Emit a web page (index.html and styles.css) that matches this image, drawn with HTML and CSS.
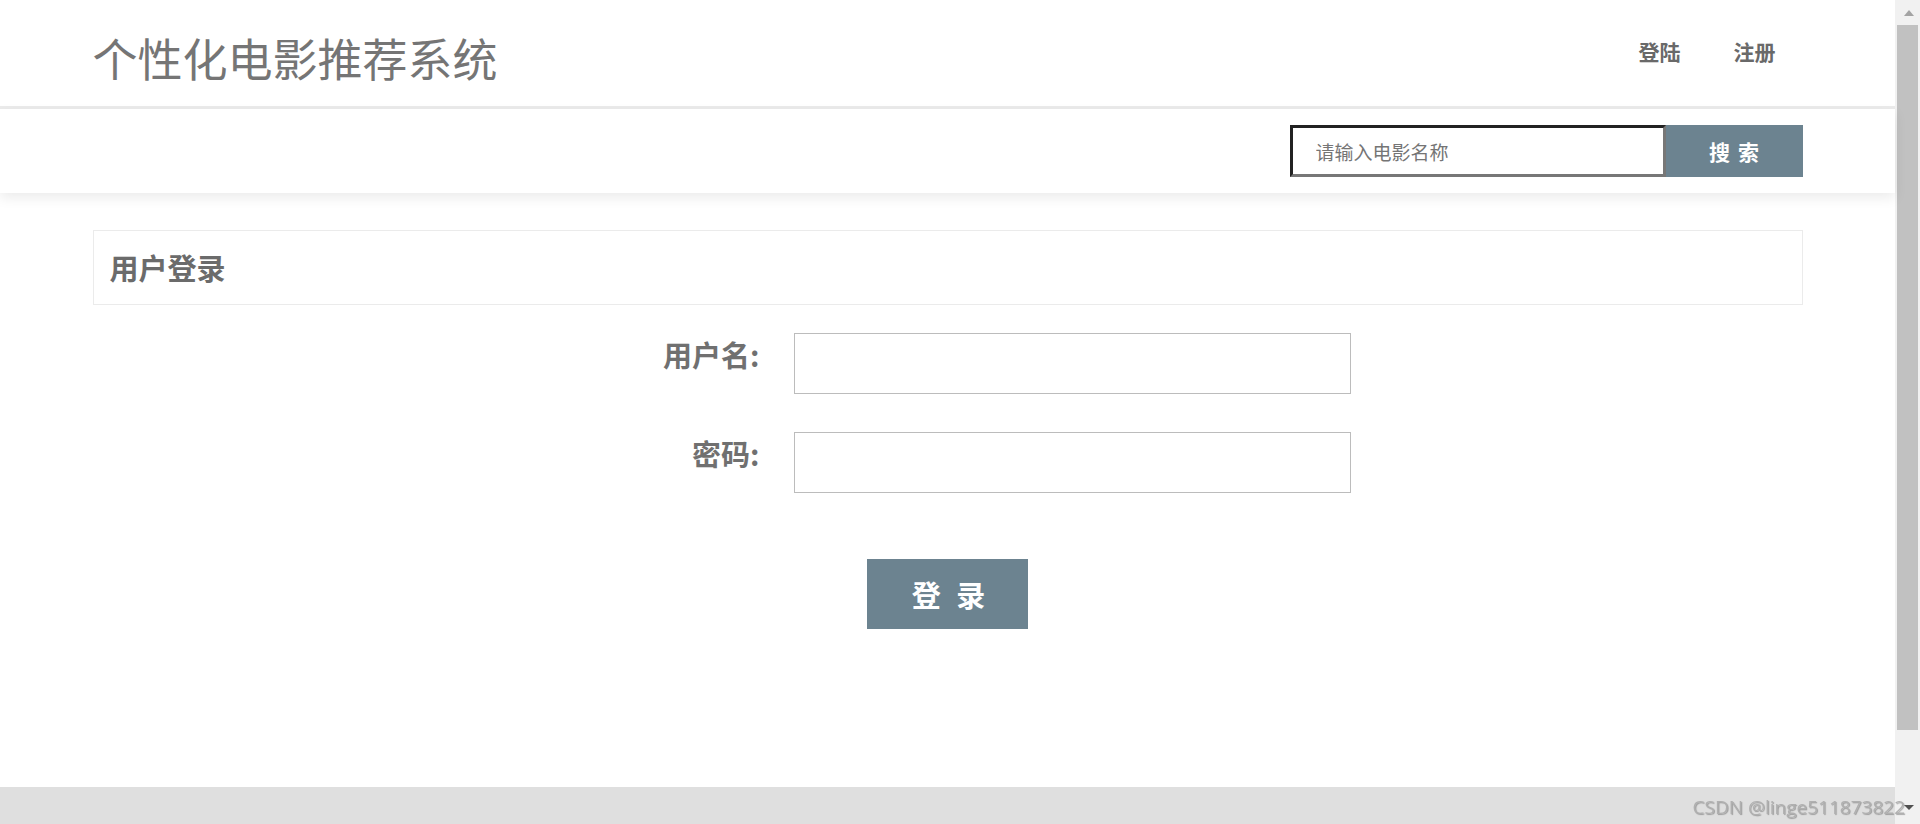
FILE: index.html
```html
<!DOCTYPE html>
<html lang="zh-CN">
<head>
<meta charset="utf-8">
<title>个性化电影推荐系统</title>
<link rel="stylesheet" href="styles.css">
</head>
<body>
<div class="window">
  <div class="page">
    <header class="topbar">
      <div class="container topbar-inner">
        <h1 class="brand">个性化电影推荐系统</h1>
        <nav class="nav">
          <a href="#" class="nav-link">登陆</a>
          <a href="#" class="nav-link">注册</a>
        </nav>
      </div>
    </header>
    <div class="searchbar">
      <div class="container searchbar-inner">
        <form class="search">
          <input class="search-input" type="text" placeholder="请输入电影名称">
          <button class="search-btn" type="button">搜 索</button>
        </form>
      </div>
    </div>
    <main class="container content">
      <div class="panel"><h2 class="panel-title">用户登录</h2></div>
      <form class="login">
        <label class="login-label">用户名:</label>
        <input class="login-input" type="text">
        <label class="login-label">密码:</label>
        <input class="login-input" type="password">
        <button class="login-btn" type="button">登 录</button>
      </form>
    </main>
    <footer class="footer"></footer>
  </div>
  <div class="scrollbar">
    <div class="sb-btn"><span class="arrow-up"></span></div>
    <div class="sb-thumb"></div>
    <div class="sb-track"></div>
    <div class="sb-btn sb-btn-down"><span class="arrow-down"></span></div>
  </div>
</div>
<div class="watermark">CSDN @linge511873822</div>
</body>
</html>
```
FILE: styles.css
```css
* { box-sizing: border-box; }
html, body { margin: 0; padding: 0; }
body {
  width: 1920px;
  height: 824px;
  overflow: hidden;
  background: #fff;
  font-family: "Noto Sans CJK SC", "Microsoft YaHei", sans-serif;
  color: #707070;
}
.window {
  display: flex;
  height: 824px;
}
.page {
  flex: 1;
  display: flex;
  flex-direction: column;
  min-width: 0;
}
.container {
  width: 1710px;
  margin: 0 auto;
}

/* top header */
.topbar {
  height: 109px;
  border-bottom: 3px solid #ebebeb;
  background: #fff;
}
.topbar-inner {
  height: 100%;
  display: flex;
  align-items: center;
  justify-content: space-between;
}
.brand {
  margin: 9px 0 0 0;
  font-size: 45px;
  line-height: 1;
  font-weight: 400;
  color: #757575;
}
.nav {
  display: flex;
  margin-top: -4px;
}
.nav-link {
  padding: 0 27px 0 26px;
  font-size: 21px;
  line-height: 1;
  font-weight: 700;
  color: #696969;
  text-decoration: none;
}

/* search bar */
.searchbar {
  position: relative;
  z-index: 1;
  height: 84px;
  background: #fff;
  box-shadow: 0 5px 12px rgba(0, 0, 0, 0.08);
}
.searchbar-inner {
  display: flex;
  justify-content: flex-end;
  padding-top: 16px;
}
.search {
  display: flex;
  margin: 0;
}
.search-input {
  width: 376px;
  height: 52px;
  margin: 0;
  padding: 0 0 0 23px;
  border-style: solid;
  border-width: 3px;
  border-color: #222 #777 #777 #222;
  font-family: inherit;
  font-size: 19px;
  color: #333;
  outline: none;
}
.search-input::placeholder { color: #757575; }
.search-btn {
  width: 137px;
  height: 52px;
  margin: 0;
  border: none;
  background: #6c8390;
  color: #fff;
  font-family: inherit;
  font-size: 21px;
  font-weight: 700;
  word-spacing: 3px;
  line-height: 1;
}

/* content */
.content {
  padding-top: 37px;
}
.panel {
  height: 75px;
  border: 1px solid #ebebeb;
  padding: 0 16px;
  display: flex;
  align-items: center;
}
.panel-title {
  margin: 0;
  font-size: 29px;
  line-height: 1;
  font-weight: 700;
  color: #6b6b6b;
}
.login {
  margin: 28px 0 0 0;
  display: grid;
  grid-template-columns: 215px 557px;
  column-gap: 34px;
  row-gap: 38px;
  justify-content: center;
}
.login-label {
  text-align: right;
  font-size: 29px;
  line-height: 42px;
  font-weight: 700;
  color: #707070;
}
.login-input {
  height: 61px;
  margin: 0;
  border: 1px solid #bcbcbc;
  font-family: inherit;
  font-size: 20px;
  padding: 0 10px;
  outline: none;
}
.login-btn {
  grid-column: 1 / -1;
  justify-self: center;
  margin-top: 28px;
  width: 161px;
  height: 70px;
  border: none;
  background: #6c8390;
  color: #fff;
  font-family: inherit;
  font-size: 29px;
  font-weight: 700;
  word-spacing: 9px;
  line-height: 1;
  padding: 0 0 0 2px;
}

/* footer band */
.footer {
  margin-top: auto;
  height: 37px;
  background: #dfdfdf;
}

/* scrollbar */
.scrollbar {
  width: 25px;
  height: 824px;
  background: #f1f1f1;
  display: flex;
  flex-direction: column;
  align-items: center;
}
.sb-btn {
  height: 25px;
  width: 100%;
  display: flex;
  justify-content: center;
  padding-top: 10px;
  padding-left: 2px;
}
.sb-btn-down {
  height: 27px;
  padding-top: 8px;
}
.arrow-up {
  width: 0;
  height: 0;
  border-left: 5.5px solid transparent;
  border-right: 5.5px solid transparent;
  border-bottom: 6px solid #a3a3a3;
}
.arrow-down {
  width: 0;
  height: 0;
  border-left: 5px solid transparent;
  border-right: 5px solid transparent;
  border-top: 5px solid #505050;
}
.sb-thumb {
  width: 21px;
  height: 705px;
  background: #c1c1c1;
}
.sb-track { flex: 1; }

/* watermark overlay */
.watermark {
  position: fixed;
  right: 15px;
  bottom: 7px;
  font-family: "Open Sans", sans-serif;
  font-size: 19px;
  line-height: 1;
  color: #b0b0b0;
  text-shadow: 1px 1px 1px rgba(0, 0, 0, 0.3);
  white-space: nowrap;
}
```
